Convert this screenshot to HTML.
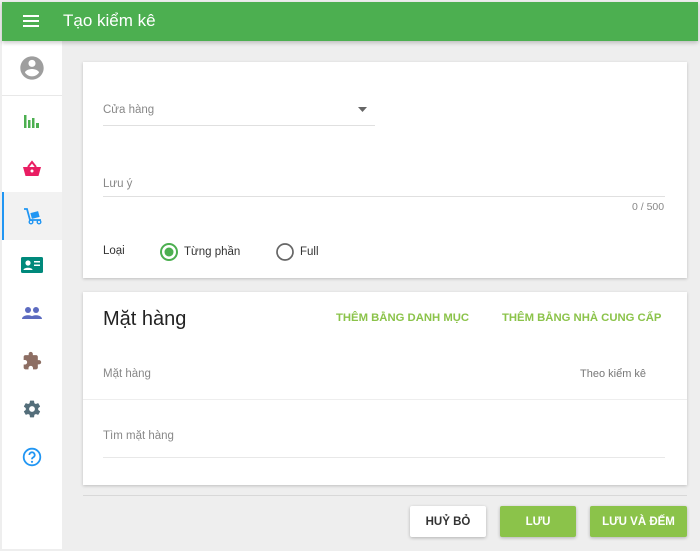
<!DOCTYPE html>
<html><head><meta charset="utf-8"><style>
*{box-sizing:border-box;margin:0;padding:0}
body{width:700px;height:551px;background:#eee;font-family:"Liberation Sans",sans-serif;position:relative;overflow:hidden}
.top{position:absolute;left:2px;top:2px;width:696px;height:39px;background:#4caf50;box-shadow:0 2px 4px rgba(0,0,0,.2);z-index:2}
.top .t{position:absolute;left:61px;top:9px;color:#fff;font-size:17px}
.side{position:absolute;left:2px;top:41px;width:60px;height:508px;background:#fff}
.ic{position:absolute;left:0;width:60px;display:flex;justify-content:center;align-items:center}
.card{position:absolute;left:83px;width:604px;background:#fff;box-shadow:0 1px 3px rgba(0,0,0,.2)}
.lbl{position:absolute;color:#888;font-size:11.5px}
.line{position:absolute;height:1px;background:#e0e0e0}
.btn{position:absolute;top:506px;height:31px;font-size:11.5px;font-weight:bold;display:flex;align-items:center;justify-content:center;box-shadow:0 1px 3px rgba(0,0,0,.25);border-radius:2px}
.g{background:#8bc34a;color:#fff}
</style></head><body>
<div class="top">
<svg style="position:absolute;left:21px;top:13px" width="16" height="12"><rect y="0" width="16" height="2" fill="#fff"/><rect y="5" width="16" height="2" fill="#fff"/><rect y="10" width="16" height="2" fill="#fff"/></svg>
<div class="t">Tạo kiểm kê</div></div>
<div class="side">
<div class="ic" style="top:0;height:55px;border-bottom:1px solid #e8e8e8"><svg width="28" height="28" viewBox="0 0 24 24"><path fill="#9e9e9e" d="M12 2C6.5 2 2 6.5 2 12s4.5 10 10 10 10-4.5 10-10S17.5 2 12 2zm0 3c1.7 0 3 1.3 3 3s-1.3 3-3 3-3-1.3-3-3 1.3-3 3-3zm0 14.2c-2.5 0-4.7-1.3-6-3.2 0-2 4-3.1 6-3.1s6 1.1 6 3.1c-1.3 1.9-3.5 3.2-6 3.2z"/></svg></div>
<div class="ic" style="top:62px;height:35px"><svg width="18" height="16"><rect x="1" y="2" width="2.5" height="13" fill="#4caf50"/><rect x="5" y="7" width="2.5" height="8" fill="#4caf50"/><rect x="9" y="5" width="2.5" height="10" fill="#4caf50"/><rect x="13" y="10" width="3" height="5" fill="#4caf50"/></svg></div>
<div class="ic" style="top:110px;height:35px"><svg width="20" height="18" viewBox="0 0 20 18"><path d="M6 7L10 2L14 7" stroke="#e91e63" stroke-width="2" fill="none"/><path fill="#e91e63" d="M1 7h18l-2.5 9h-13z"/><circle cx="10" cy="11" r="1.5" fill="#fff"/></svg></div>
<div class="ic" style="top:151px;height:48px;background:#f2f2f2;border-left:2px solid #2196f3"><svg width="20" height="20" viewBox="0 0 20 20"><path d="M1 3h3l3 11h11" stroke="#2196f3" stroke-width="1.8" fill="none"/><rect x="8" y="6" width="8" height="6" fill="#2196f3" transform="rotate(-15 12 9)"/><circle cx="8" cy="16" r="1.8" fill="none" stroke="#2196f3" stroke-width="1.4"/><circle cx="16" cy="16" r="1.8" fill="none" stroke="#2196f3" stroke-width="1.4"/></svg></div>
<div class="ic" style="top:206px;height:35px"><svg width="22" height="18"><rect x="0" y="1" width="22" height="16" rx="1.5" fill="#00897b"/><circle cx="7" cy="7" r="2.6" fill="#fff"/><path d="M2.5 14c0-3 9-3 9 0z" fill="#fff"/><rect x="13" y="5" width="6" height="1.5" fill="#fff"/><rect x="13" y="8.5" width="6" height="1.5" fill="#fff"/></svg></div>
<div class="ic" style="top:254px;height:35px"><svg width="20" height="14"><circle cx="6" cy="4" r="3" fill="#5c6bc0"/><circle cx="14" cy="4" r="3" fill="#5c6bc0"/><path d="M0 13c0-5 12-5 12 0zM8 13c0-5 12-5 12 0z" fill="#5c6bc0"/></svg></div>
<div class="ic" style="top:302px;height:35px"><svg width="20" height="20" viewBox="0 0 24 24"><path fill="#8d6e63" d="M20.5 11H19V7c0-1.1-.9-2-2-2h-4V3.5C13 2.1 11.9 1 10.5 1S8 2.1 8 3.5V5H4c-1.1 0-2 .9-2 2v3.8h1.5c1.5 0 2.7 1.2 2.7 2.7S5 16.2 3.5 16.2H2V20c0 1.1.9 2 2 2h3.8v-1.5c0-1.5 1.2-2.7 2.7-2.7s2.7 1.2 2.7 2.7V22H17c1.1 0 2-.9 2-2v-4h1.5c1.4 0 2.5-1.1 2.5-2.5S21.9 11 20.5 11z"/></svg></div>
<div class="ic" style="top:350px;height:35px"><svg width="20" height="20" viewBox="0 0 24 24"><path fill="#546e7a" d="M19.4 13c.04-.3.06-.6.06-1s-.02-.7-.06-1l2.1-1.650c.2-.15.25-.42.12-.64l-2-3.46c-.12-.22-.39-.3-.61-.22l-2.49 1c-.52-.4-1.080-.73-1.690-.98l-.38-2.650A.49.49 0 0014 2h-4c-.25 0-.46.18-.49.42l-.38 2.65c-.61.25-1.170.59-1.690.98l-2.49-1a.5.5 0 00-.61.22l-2 3.46c-.13.22-.07.49.12.64L4.57 11c-.04.32-.07.65-.07 1s.03.68.07 1l-2.11 1.65c-.19.15-.24.42-.12.64l2 3.46c.12.22.39.3.61.22l2.49-1c.52.4 1.080.73 1.690.98l.38 2.65c.03.24.24.42.49.42h4c.25 0 .46-.18.49-.42l.38-2.65c.61-.25 1.170-.59 1.690-.98l2.49 1c.23.09.49 0 .61-.22l2-3.46c.12-.22.07-.49-.12-.64L19.4 13zM12 15.5A3.5 3.5 0 1112 8.5a3.5 3.5 0 010 7z"/></svg></div>
<div class="ic" style="top:398px;height:35px"><svg width="20" height="20" viewBox="0 0 20 20"><circle cx="10" cy="10" r="8.3" fill="none" stroke="#2196f3" stroke-width="1.8"/><path d="M7.3 8a2.7 2.7 0 1 1 3.7 2.5c-.8.4-1 .9-1 1.8" fill="none" stroke="#2196f3" stroke-width="1.8"/><circle cx="10" cy="14.8" r="1.1" fill="#2196f3"/></svg></div>
</div>

<div class="card" style="top:62px;height:216px">
<div class="lbl" style="left:20px;top:42px">Cửa hàng</div>
<svg style="position:absolute;left:275px;top:45px" width="9" height="5"><path d="M0 0h9L4.5 5z" fill="#666"/></svg>
<div class="line" style="left:20px;top:63px;width:272px"></div>
<div class="lbl" style="left:20px;top:116px">Lưu ý</div>
<div class="line" style="left:20px;top:134px;width:562px"></div>
<div class="lbl" style="left:549px;top:139px;font-size:10.5px">0 / 500</div>
<div style="position:absolute;left:20px;top:183px;font-size:11.5px;color:#333">Loại</div>
<svg style="position:absolute;left:77px;top:181px" width="18" height="18"><circle cx="9" cy="9" r="8" fill="none" stroke="#4caf50" stroke-width="2"/><circle cx="9" cy="9" r="4.5" fill="#4caf50"/></svg>
<div style="position:absolute;left:101px;top:184px;font-size:11.5px;color:#333">Từng phần</div>
<svg style="position:absolute;left:193px;top:181px" width="18" height="18"><circle cx="9" cy="9" r="8" fill="none" stroke="#666" stroke-width="1.7"/></svg>
<div style="position:absolute;left:217px;top:184px;font-size:11.5px;color:#333">Full</div>
</div>

<div class="card" style="top:292px;height:193px">
<div style="position:absolute;left:20px;top:16px;font-size:20px;color:#222">Mặt hàng</div>
<div style="position:absolute;left:253px;top:20px;font-size:11.3px;font-weight:bold;color:#8bc34a">THÊM BẰNG DANH MỤC</div>
<div style="position:absolute;left:419px;top:20px;font-size:11.3px;font-weight:bold;color:#8bc34a">THÊM BẰNG NHÀ CUNG CẤP</div>
<div class="lbl" style="left:20px;top:76px">Mặt hàng</div>
<div class="lbl" style="left:497px;top:76px;color:#777;font-size:11px">Theo kiểm kê</div>
<div class="line" style="left:0;top:107px;width:604px;background:#eee"></div>
<div class="lbl" style="left:20px;top:138px">Tìm mặt hàng</div>
<div class="line" style="left:20px;top:165px;width:562px;background:#e8e8e8"></div>
</div>
<div class="line" style="left:83px;top:495px;width:604px;background:#d8d8d8"></div>
<div class="btn" style="left:410px;width:76px;background:#fff;color:#333">HUỶ BỎ</div>
<div class="btn g" style="left:500px;width:76px">LƯU</div>
<div class="btn g" style="left:590px;width:97px">LƯU VÀ ĐẾM</div>
</body></html>
